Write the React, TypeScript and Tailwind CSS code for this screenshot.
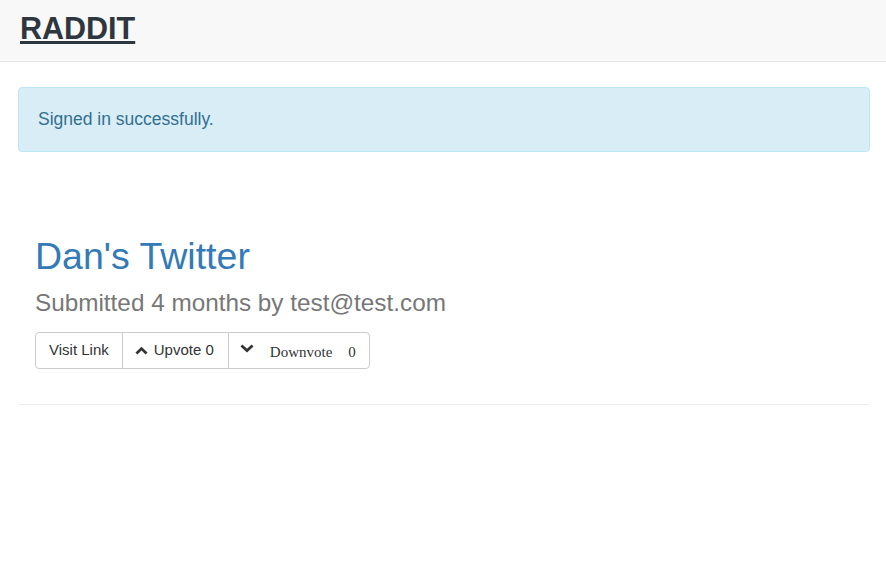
import React from "react";

function ChevronUp() {
  return (
    <svg width="13" height="9" viewBox="0 0 13 9" className="block">
      <path d="M0.5 6.5 L6.5 0.8 L12.5 6.5 L10.6 8.4 L6.5 4.4 L2.4 8.4 Z" fill="#333" />
    </svg>
  );
}

function ChevronDown() {
  return (
    <svg width="14" height="9" viewBox="0 0 14 9" className="block">
      <path d="M0.5 2.4 L2.4 0.5 L7 4.8 L11.6 0.5 L13.5 2.4 L7 8.5 Z" fill="#333" />
    </svg>
  );
}

export default function App() {
  return (
    <div className="min-h-[569px] bg-white" style={{ fontFamily: '"Liberation Sans", Arial, sans-serif' }}>
      <div className="h-[62px] bg-[#f8f8f8] border-b border-[#e7e7e7] flex items-center px-[20px]">
        <a className="text-[30.5px] font-bold text-[#2e3640] underline leading-none decoration-[3px] underline-offset-[2px] mb-[4px]">RADDIT</a>
      </div>
      <div className="pl-[18px] pr-[16px]">
        <div className="mt-[25px] h-[65px] bg-[#d9edf7] border border-[#bce8f1] rounded-[4px] text-[#31708f] text-[17.5px] flex items-center px-[19px]">
          Signed in successfully.
        </div>
        <div className="mt-[84px] px-[17px]">
          <div className="text-[37.5px] leading-[1.1] text-[#337ab7]">Dan's Twitter</div>
          <div className="mt-[13px] text-[24.3px] leading-[1.1] text-[#777]">Submitted 4 months by test@test.com</div>
          <div className="mt-[15px] inline-flex h-[37px] border border-[#ccc] rounded-[4px] divide-x divide-[#ccc] text-[#333] text-[15px]">
            <div className="flex items-center px-[13px]">Visit Link</div>
            <div className="flex items-center pl-[12px] pr-[14px]">
              <ChevronUp />
              <span className="ml-[6px]">Upvote 0</span>
            </div>
            <div className="flex items-center pl-[11px] pr-[13px]" style={{ fontFamily: '"Liberation Serif", "Times New Roman", serif' }}>
              <div className="-mt-[3px]"><ChevronDown /></div>
              <span className="ml-[16px] mt-[4px]">Downvote</span>
              <span className="ml-[16px] mt-[4px]">0</span>
            </div>
          </div>
        </div>
        <div className="mt-[35px] border-t border-[#eee]" />
      </div>
    </div>
  );
}
